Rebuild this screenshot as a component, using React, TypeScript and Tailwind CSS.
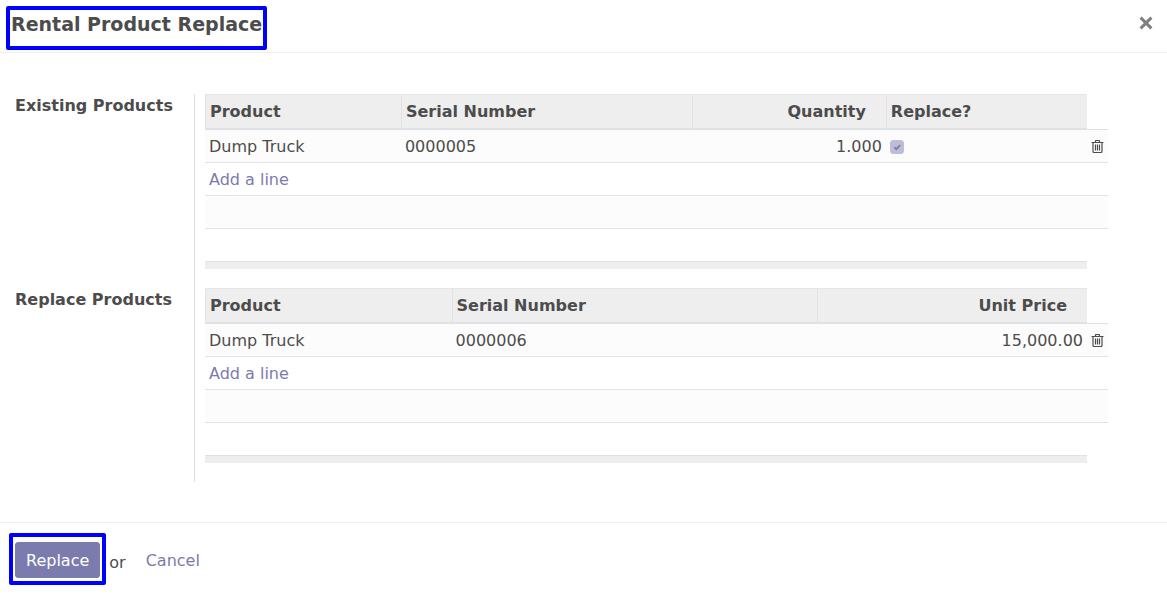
import { useState } from "react";
import type { ReactNode } from "react";

type Column = { title: string; width: string; numeric?: boolean };

function CloseIcon() {
  return (
    <svg width="14" height="14" viewBox="0 0 14 14" aria-hidden="true">
      <path
        d="M1.6 1.6 12.4 12.4M12.4 1.6 1.6 12.4"
        fill="none"
        stroke="#7f7f7f"
        strokeWidth="3"
        strokeLinecap="butt"
      />
    </svg>
  );
}

function TrashIcon() {
  return (
    <svg width="13" height="14" viewBox="0 0 13 14" aria-hidden="true" className="block">
      <path
        d="M0.5 3.5H12.5M4.5 3.5V1.9Q4.5 1.5 4.9 1.5H8.1Q8.5 1.5 8.5 1.9V3.5M2 3.5V12.2Q2 13.5 3.2 13.5H9.8Q11 13.5 11 12.2V3.5M4.5 5.5V11.5M6.5 5.5V11.5M8.5 5.5V11.5"
        fill="none"
        stroke="#4c4c4c"
        strokeWidth="1.2"
      />
    </svg>
  );
}

function ReplaceCheckbox() {
  const [checked, setChecked] = useState(true);
  return (
    <label className="relative block size-3.5">
      <input
        type="checkbox"
        aria-label="Replace Dump Truck"
        checked={checked}
        onChange={(e) => setChecked(e.target.checked)}
        className="block size-3.5 appearance-none rounded-[3px] border border-[#bebdd7] checked:bg-[#bebdd7]"
      />
      {checked && (
        <svg viewBox="0 0 14 14" className="pointer-events-none absolute inset-0 size-3.5" aria-hidden="true">
          <path d="M4.3 7.2 6.3 9.2 10.2 5.2" fill="none" stroke="#7c7bad" strokeWidth="1.8" />
        </svg>
      )}
    </label>
  );
}

function LinesTable({ label, columns, cells }: { label: string; columns: Column[]; cells: ReactNode[] }) {
  const span = columns.length + 1;
  return (
    <table aria-label={label} className="w-full table-fixed border-separate border-spacing-0 leading-6">
      <colgroup>
        {columns.map((c) => (
          <col key={c.title} className={c.width} />
        ))}
        <col className="w-[21px]" />
      </colgroup>
      <thead>
        <tr>
          {columns.map((c) => (
            <th
              key={c.title}
              className={
                "h-9 border-t border-b-2 border-l border-t-[#e4e6e8] border-b-[#dee2e6] border-l-[#e1e3e5] bg-[#eeeeee] py-0 pl-1 align-middle font-bold " +
                (c.numeric ? "pr-5 text-right" : "text-left")
              }
            >
              {c.title}
            </th>
          ))}
          <td className="border-b border-[#dee2e6]" />
        </tr>
      </thead>
      <tbody>
        <tr className="bg-[#fcfcfc]">
          {columns.map((c, i) => (
            <td
              key={c.title}
              className={"h-[33px] border-b border-[#e0e3e7] px-1 pt-0.5 pb-0 " + (c.numeric ? "text-right" : "")}
            >
              {cells[i]}
            </td>
          ))}
          <td className="border-b border-[#e0e3e7] py-0 pl-1">
            <button type="button" aria-label="Delete row" className="block">
              <TrashIcon />
            </button>
          </td>
        </tr>
        <tr>
          <td colSpan={span} className="h-[33px] border-b border-[#e0e3e7] px-1 pt-0.5 pb-0">
            <a href="#add" className="text-[#7c7bad]">
              Add a line
            </a>
          </td>
        </tr>
        <tr className="bg-[#fcfcfc]">
          <td colSpan={span} className="h-[33px] border-b border-[#e0e3e7] p-0" />
        </tr>
        <tr>
          <td colSpan={span} className="h-8 p-0" />
        </tr>
      </tbody>
      <tfoot>
        <tr>
          <td colSpan={columns.length} className="h-2 border-t border-[#dee2e6] bg-[#eeeeee] p-0" />
          <td className="p-0" />
        </tr>
      </tfoot>
    </table>
  );
}

const existingColumns: Column[] = [
  { title: "Product", width: "w-[21.7%]" },
  { title: "Serial Number", width: "w-[32.2%]" },
  { title: "Quantity", width: "w-[21.5%]", numeric: true },
  { title: "Replace?", width: "w-auto" },
];

const replaceColumns: Column[] = [
  { title: "Product", width: "w-[27.3%]" },
  { title: "Serial Number", width: "w-[40.5%]" },
  { title: "Unit Price", width: "w-auto", numeric: true },
];

function Group({ label, children }: { label: string; children: ReactNode }) {
  return (
    <div className="grid grid-cols-[179px_1fr]">
      <div className="font-bold leading-6">{label}</div>
      <div className="border-l border-[#dddddd] pb-[19px] pl-2.5">{children}</div>
    </div>
  );
}

export default function App() {
  return (
    <div
      role="dialog"
      aria-label="Rental Product Replace"
      className="bg-white font-['DejaVu_Sans',Verdana,sans-serif] text-[16px] text-[#4c4c4c]"
    >
      <header className="flex items-start justify-between border-b border-[#f0f0f0] pt-1.5 pr-3.5 pb-0.5 pl-1.5">
        <h1 className="h-11 rounded-[2px] border-4 border-[#0000ff] px-px text-[19px] leading-7 font-bold">
          Rental Product Replace
        </h1>
        <button type="button" aria-label="Close" className="pt-2.5">
          <CloseIcon />
        </button>
      </header>

      <main className="pt-[41px] pr-[59px] pb-10 pl-[15px]">
        <Group label="Existing Products">
          <LinesTable
            label="Existing Products"
            columns={existingColumns}
            cells={["Dump Truck", "0000005", "1.000", <ReplaceCheckbox key="replace" />]}
          />
        </Group>
        <Group label="Replace Products">
          <LinesTable label="Replace Products" columns={replaceColumns} cells={["Dump Truck", "0000006", "15,000.00"]} />
        </Group>
      </main>

      <footer className="flex items-center border-t border-[#eeeeee] pt-2.5 pb-4 pl-[9px]">
        <div className="rounded-[2px] border-4 border-[#0000ff] px-0.5 pt-[5px] pb-[3px]">
          <button
            type="button"
            className="block h-9 rounded-[3px] border border-[#7c7bad] bg-[#7c7bad] px-2.5 pt-0.5 text-white"
          >
            Replace
          </button>
        </div>
        <span className="ml-[3px] pt-2">or</span>
        <a href="#cancel" className="ml-5 pt-1 text-[#7c7bad]">
          Cancel
        </a>
      </footer>
    </div>
  );
}
